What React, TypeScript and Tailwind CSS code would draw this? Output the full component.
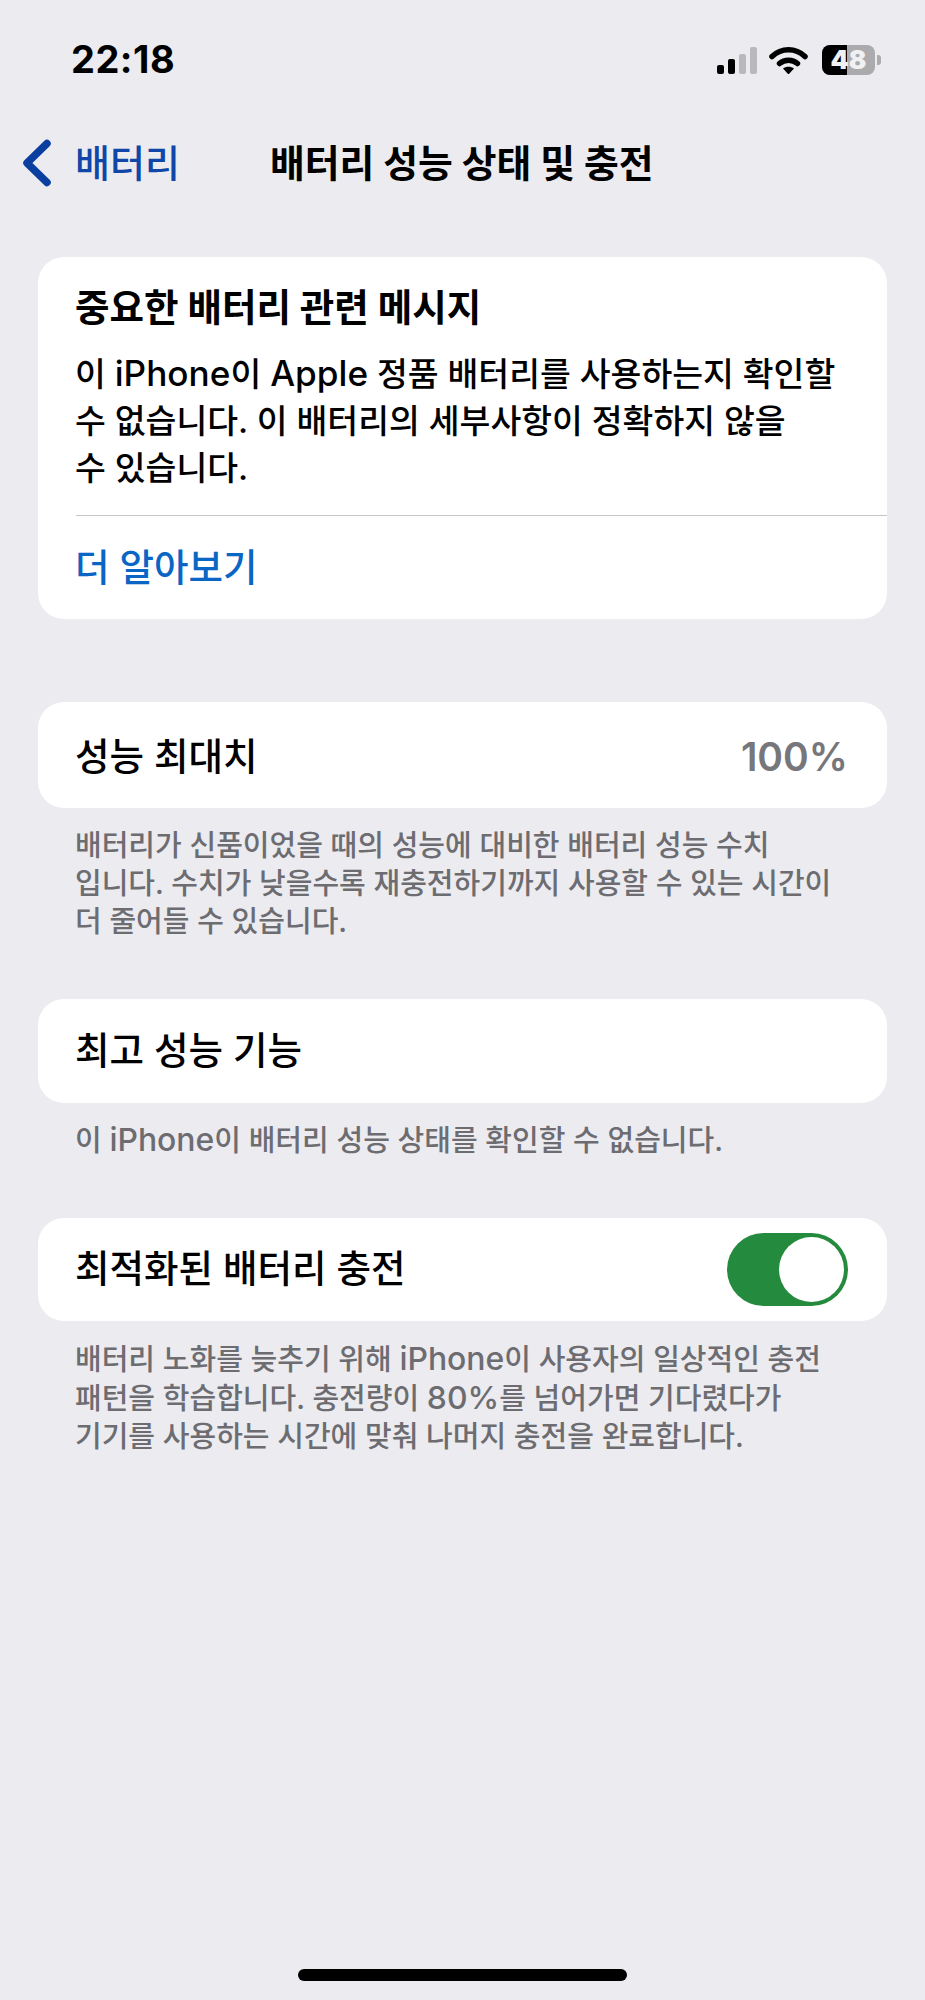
const FONT = "font-['Inter','Noto_Sans_CJK_KR',sans-serif]";

// latin words and digits sit slightly larger than the hangul around them
const Lines = ({ lines, latin }: { lines: string[]; latin: string }) => (
  <>
    {lines.map((line) => (
      <div key={line} className="whitespace-nowrap">
        {line.split(/([A-Za-z0-9%]+)/).map((part, i) =>
          i % 2 === 1 ? (
            <span key={i} className={latin}>
              {part}
            </span>
          ) : (
            part
          ),
        )}
      </div>
    ))}
  </>
);

const Footer = ({ lines, className }: { lines: string[]; className: string }) => (
  <div className={`pl-[75px] text-[29px] font-medium leading-[38px] text-[#6c6c71] ${className}`}>
    <Lines lines={lines} latin="text-[1.1em]" />
  </div>
);

const Row = ({ className, children }: { className: string; children: React.ReactNode }) => (
  <div className={`mx-[38px] flex items-center justify-between rounded-[26px] bg-white pl-[37px] pr-[39px] text-[37.5px] font-medium text-black ${className}`}>
    {children}
  </div>
);

const StatusIcons = () => (
  <div className="flex items-center">
    <div className="flex h-[28px] items-end gap-[3.5px]">
      <div className="h-[9px] w-[7.5px] rounded-[2px] bg-black" />
      <div className="h-[15px] w-[7.5px] rounded-[2px] bg-black" />
      <div className="h-[20px] w-[7.5px] rounded-[2px] bg-[#b9b9bc]" />
      <div className="h-[27px] w-[7.5px] rounded-[2px] bg-[#b9b9bc]" />
    </div>
    <svg className="ml-[12px]" width="39" height="28" viewBox="0 0 39 28" fill="none">
      <path d="M3 10.5C12.5 1.5 26.5 1.5 36 10.5" stroke="black" strokeWidth="5.5" strokeLinecap="round" />
      <path d="M10.5 17.5C15.5 13 23.5 13 28.5 17.5" stroke="black" strokeWidth="5.5" strokeLinecap="round" />
      <path d="M14 22.5C17 20 22 20 25 22.5L19.5 28.5Z" fill="black" />
    </svg>
    <div className="relative ml-[14px] flex h-[30px] w-[53px] rounded-[8px] bg-[#ababae]">
      <div className="h-full w-[25px] rounded-l-[8px] bg-black" />
      <div className="absolute inset-0 flex items-center justify-center text-[26px] leading-[30px] font-black text-[#f1f1f4]">
        48
      </div>
    </div>
    <div className="ml-[2px] h-[10px] w-[4px] rounded-r-[3px] bg-[#ababae]" />
  </div>
);

export default function App() {
  return (
    <div lang="ko" className={`flex h-[2000px] w-[925px] flex-col overflow-hidden bg-[#ebebf0] ${FONT}`}>
      <div className="flex h-[122px] items-center justify-between pb-[3px] pl-[71px] pr-[44px]">
        <span className="text-[38px] font-bold tracking-[0.5px] text-black">22:18</span>
        <StatusIcons />
      </div>

      <div className="flex h-[82px] items-center pl-[22px]">
        <svg width="30" height="48" viewBox="0 0 30 48" fill="none">
          <path d="M25 4.5L5 24L25 43.5" stroke="#0b3f9f" strokeWidth="7.5" strokeLinecap="round" strokeLinejoin="round" />
        </svg>
        <span className="ml-[23px] whitespace-nowrap text-[38px] font-medium text-[#0f46a8]">배터리</span>
        <span className="ml-[90px] whitespace-nowrap text-[37.8px] font-bold text-black">배터리 성능 상태 및 충전</span>
      </div>

      <div className="mx-[38px] mt-[53px] h-[362px] rounded-[26px] bg-white pt-[28px] pl-[37px] text-black">
        <div className="text-[37.5px] font-bold leading-[46px]">중요한 배터리 관련 메시지</div>
        <div className="mt-[19px] text-[33.5px] font-medium leading-[47px]">
          <Lines
            latin="text-[1.05em]"
            lines={[
              '이 iPhone이 Apple 정품 배터리를 사용하는지 확인할',
              '수 없습니다. 이 배터리의 세부사항이 정확하지 않을',
              '수 있습니다.',
            ]}
          />
        </div>
        <div className="mt-[23px] ml-px h-px bg-[#c6c6c8]" />
        <div className="flex h-[104px] items-center pt-[1px] text-[37.5px] font-medium text-[#0a66c4]">더 알아보기</div>
      </div>

      <Row className="mt-[83px] h-[106px] pt-[4px]">
        <span>성능 최대치</span>
        <span className="text-[39px] font-semibold text-[#77777b]">100%</span>
      </Row>
      <Footer
        className="mt-[19px]"
        lines={[
          '배터리가 신품이었을 때의 성능에 대비한 배터리 성능 수치',
          '입니다. 수치가 낮을수록 재충전하기까지 사용할 수 있는 시간이',
          '더 줄어들 수 있습니다.',
        ]}
      />

      <Row className="mt-[58px] h-[104px]">
        <span>최고 성능 기능</span>
      </Row>
      <Footer className="mt-[18px]" lines={['이 iPhone이 배터리 성능 상태를 확인할 수 없습니다.']} />

      <Row className="mt-[58px] h-[103px]">
        <span>최적화된 배터리 충전</span>
        <div className="flex h-[73px] w-[121px] items-center justify-end rounded-full bg-[#248a3d] pr-[4px]">
          <div className="h-[65px] w-[65px] rounded-full bg-white" />
        </div>
      </Row>
      <Footer
        className="mt-[19px]"
        lines={[
          '배터리 노화를 늦추기 위해 iPhone이 사용자의 일상적인 충전',
          '패턴을 학습합니다. 충전량이 80%를 넘어가면 기다렸다가',
          '기기를 사용하는 시간에 맞춰 나머지 충전을 완료합니다.',
        ]}
      />

      <div className="mt-auto mb-[19px] ml-[298px] h-[12px] w-[329px] rounded-full bg-black" />
    </div>
  );
}
